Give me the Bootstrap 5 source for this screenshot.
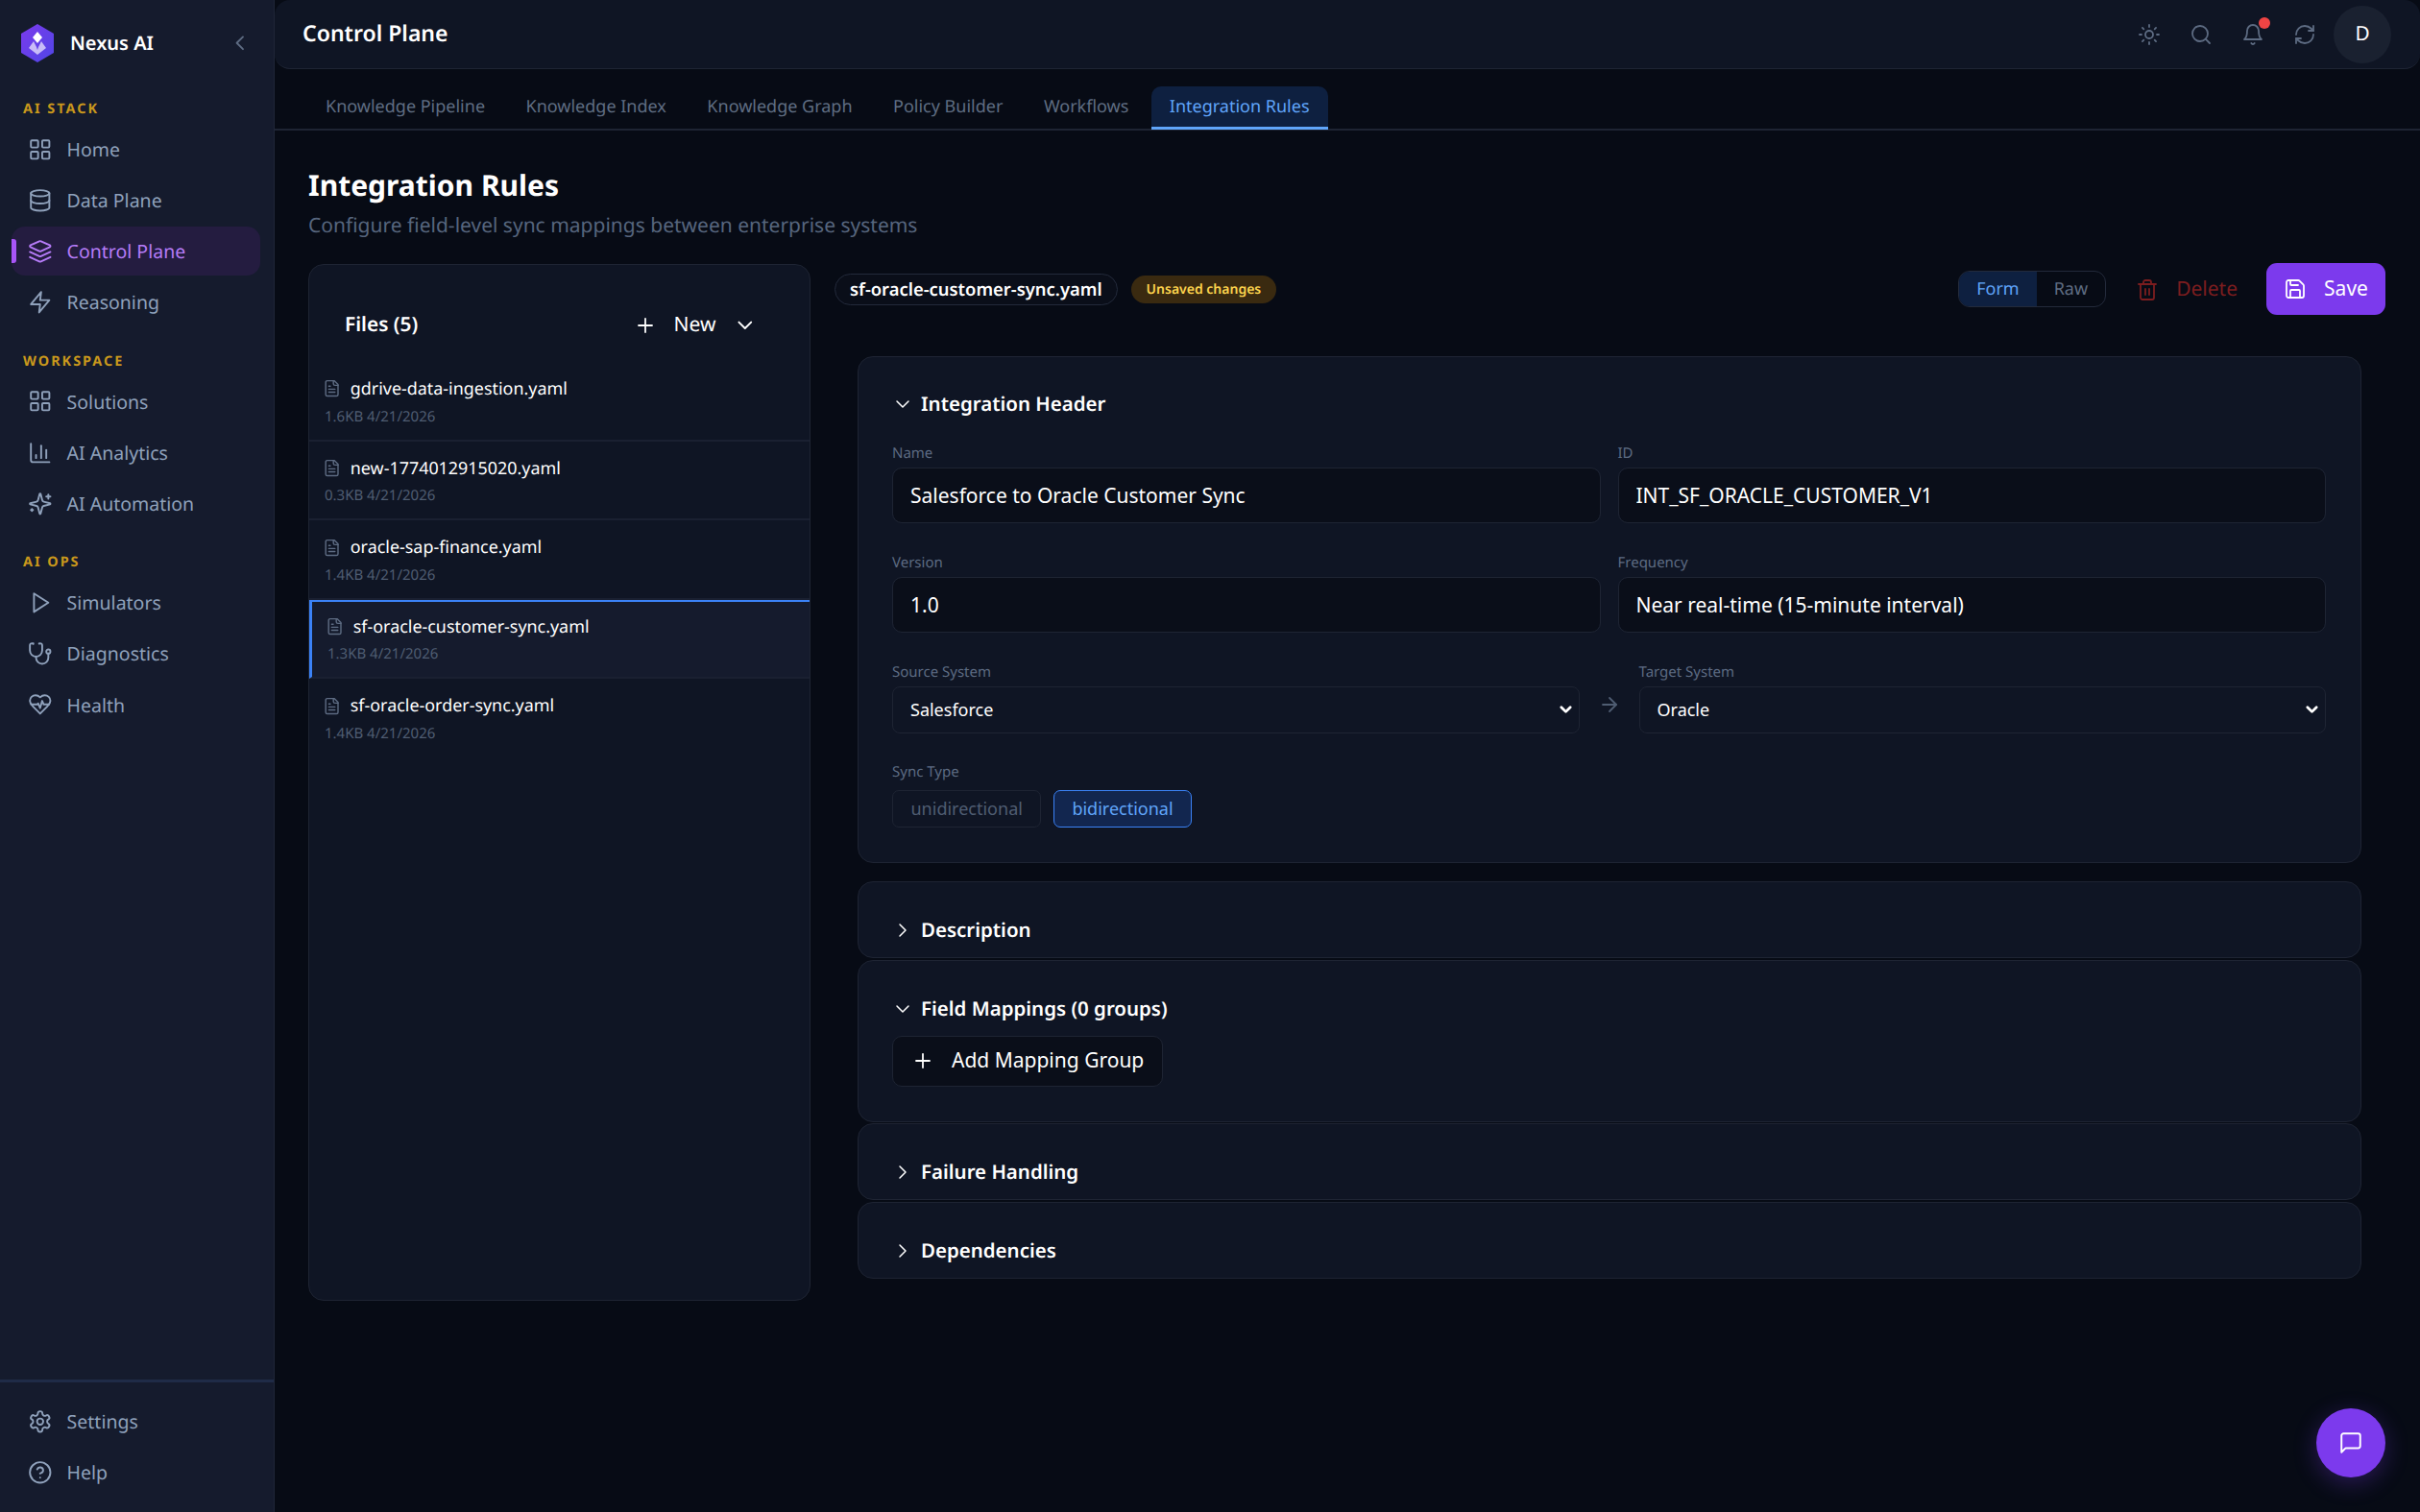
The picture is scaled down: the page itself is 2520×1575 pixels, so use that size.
<!DOCTYPE html>
<html lang="en">
<head>
  <meta charset="UTF-8">
  <meta name="viewport" content="width=device-width, initial-scale=1.0">
  <title>Nexus AI - Integration Rules</title>
  <link href="https://cdn.jsdelivr.net/npm/bootstrap@5.3.0/dist/css/bootstrap.min.css" rel="stylesheet">
  <style>
    body {
      background-color: #070b15;
      color: #fff;
      font-family: "Noto Sans", sans-serif;
      text-rendering: geometricPrecision;
      height: 100vh;
      overflow: hidden;
    }

    svg.ico {
      fill: none;
      stroke: currentColor;
      stroke-width: 1.8;
      stroke-linecap: round;
      stroke-linejoin: round;
      flex-shrink: 0;
    }

    /* sidebar */
    .side {
      width: 286px;
      flex-shrink: 0;
      background-color: #151b2d;
      border-right: 1px solid #1f2638;
      padding: 0 14px 0 12px;
    }

    .brand {
      height: 103px;
      padding: 0 0 14px 10px;
      flex-shrink: 0;
    }

    .brand-name {
      font-size: 20px;
      font-weight: 600;
      margin-left: 17px;
    }

    .brand-toggle {
      margin-right: 8px;
      color: #5d6b82;
    }

    .side-label {
      font-size: 14.4px;
      line-height: 22px;
      font-weight: 700;
      letter-spacing: 2px;
      color: #c9981c;
      padding-left: 12px;
      margin-bottom: 5px;
    }

    .side-link {
      height: 51px;
      margin-bottom: 2.2px;
      padding-left: 17px;
      gap: 15px;
      color: #8fa1bb;
      font-size: 19.5px;
      border-radius: 14px;
      text-decoration: none;
      position: relative;
    }

    .side-link.on {
      background-color: #241c40;
      color: #b57bf7;
    }

    .side-link.on::before {
      content: "";
      position: absolute;
      left: 0;
      top: 13px;
      width: 5px;
      height: 25px;
      background-color: #a855f7;
      border-radius: 0 3px 3px 0;
    }

    .side-group { margin-bottom: 23px; }

    .side-foot {
      margin: auto -14px 0 -12px;
      padding: 15px 14px 13.5px 12px;
      border-top: 3px solid #1f2b47;
    }

    /* top bar */
    .topbar {
      height: 72px;
      flex-shrink: 0;
      background-color: #0f1524;
      border-bottom: 1px solid #1e2433;
      border-radius: 16px;
      padding: 0 30px 0 29px;
    }

    .topbar-title {
      font-size: 23.04px;
      font-weight: 600;
      margin-top: -2px;
    }

    .top-ico {
      width: 54px;
      color: #5d6b82;
      position: relative;
    }

    .bell-dot {
      position: absolute;
      top: -6px;
      left: 33px;
      width: 12px;
      height: 12px;
      border-radius: 50%;
      background-color: #ef4444;
    }

    .avatar {
      width: 60px;
      height: 60px;
      margin-left: 3px;
      border-radius: 50%;
      background-color: #1a2130;
      font-size: 20.8px;
    }

    /* tabs */
    .tabbar {
      height: 64px;
      flex-shrink: 0;
      padding: 18px 0 0 34px;
      gap: 4.5px;
      border-bottom: 2px solid #1e2433;
    }

    .tabbar .nav-link {
      height: 45px;
      padding: 0 19px;
      font-size: 18px;
      color: #5f6d82;
      border-radius: 10px 10px 0 0;
      line-height: 42px;
    }

    .tabbar .nav-link.active {
      background-color: #0e2040;
      color: #60a5fa;
      border-bottom: 3px solid #60a5fa;
    }

    .page {
      padding: 35px 36px 0 35px;
    }

    .page-title {
      font-size: 30px;
      line-height: 44px;
      font-weight: 700;
      margin: 0;
    }

    .page-sub {
      font-size: 21px;
      line-height: 30px;
      color: #56657d;
      margin: 5px 0 25px;
    }

    /* files panel */
    .files {
      width: 523px;
      height: 1080px;
      flex-shrink: 0;
      background-color: #0f1524;
      border: 1px solid #1e2433;
      border-radius: 16px;
      overflow: hidden;
    }

    .files-head {
      padding: 44px 54px 19px 37px;
      height: 101px;
    }

    .files-title {
      font-size: 20.8px;
      font-weight: 600;
    }

    .new-btn {
      gap: 18px;
      font-size: 21px;
      color: #fff;
    }

    .file-row {
      background-color: transparent;
      color: #fff;
      border: 0;
      border-bottom: 2px solid #1a2031;
      border-radius: 0;
      height: 82.6px;
      padding: 15px 14px 0 14.4px;
    }

    .file-row:last-child { border-bottom: 0; }

    .file-row.on {
      background-color: #151b2d;
      border-top: 2px solid #3b82f6;
      border-left: 3px solid #3b82f6;
      padding-top: 13px;
    }

    .file-name {
      font-size: 17.92px;
      line-height: 26px;
      gap: 9.2px;
    }

    .file-name svg { color: #5d6b82; }

    .file-meta {
      font-size: 15px;
      line-height: 20px;
      color: #4f5d72;
      margin: 5.5px 0 0 1.6px;
    }

    /* editor */
    .editor {
      margin-left: 25px;
      min-width: 0;
    }

    .editor-bar {
      height: 54px;
      margin-top: -1px;
    }

    .file-pill {
      height: 33px;
      padding: 0 15px;
      margin-top: 1px;
      border: 1px solid #232a3b;
      border-radius: 17px;
      font-size: 18.4px;
      font-weight: 600;
      background-color: #0a0e19;
    }

    .dirty-pill {
      height: 29px;
      padding: 0 16px;
      margin: 1px 0 0 14px;
      border-radius: 15px;
      background-color: #3a2a10;
      color: #fcd34d;
      font-size: 14px;
      font-weight: 600;
    }

    .mode-group {
      border: 1px solid #232a3b;
      border-radius: 12px;
      overflow: hidden;
      height: 38px;
    }

    .mode-group span {
      padding: 0 18px;
      font-size: 18px;
      line-height: 36px;
      color: #5f6d82;
    }

    .mode-group span.on {
      background-color: #0e2040;
      color: #60a5fa;
    }

    .del-btn {
      color: #7c1d1f;
      font-size: 21px;
      gap: 18px;
      margin: 1px 30px 0 31px;
    }

    .save-btn {
      width: 124px;
      height: 54px;
      gap: 18px;
      padding: 0;
      font-size: 21px;
      color: #fff;
      background-color: #7c3aed;
      border: 0;
      border-radius: 11px;
    }

    .sections {
      margin: 43px 25px 0 24px;
    }

    .sect {
      background-color: #0f1524;
      border: 1px solid #1e2433;
      border-radius: 16px;
      padding: 34px 36px 12px 35px;
      margin-bottom: 1.5px;
    }

    .sect.first {
      padding-top: 33px;
      padding-bottom: 36px;
      margin-bottom: 19px;
    }

    .sect-title {
      font-size: 20.48px;
      line-height: 32px;
      font-weight: 600;
      gap: 7px;
      margin-left: -1px;
    }

    .sect-title svg.ico { stroke-width: 1.5; }

    .field-label {
      font-size: 15px;
      line-height: 22px;
      color: #5d6b82;
      margin: 0 0 4px;
      display: block;
    }

    .field-label.sync-label { margin: 29px 0 8px; }

    .grid-fields {
      --bs-gutter-x: 18px;
      --bs-gutter-y: 30px;
      margin-top: -6px;
    }

    .form-control.fld {
      height: 58px;
      background-color: #0a0e19;
      border: 1px solid #1e2433;
      border-radius: 10px;
      color: #fff;
      font-size: 21px;
      padding: 0 18px;
    }

    .form-select.fld-sel {
      height: 49px;
      background-color: #0f1524;
      border: 1px solid #1e2433;
      border-radius: 8px;
      color: #fff;
      font-size: 18px;
      padding: 0 18px;
      background-image: url("data:image/svg+xml,%3csvg xmlns='http://www.w3.org/2000/svg' viewBox='0 0 16 16'%3e%3cpath fill='none' stroke='%23fff' stroke-linecap='round' stroke-linejoin='round' stroke-width='3' d='m3 5 5 5 5-5'/%3e%3c/svg%3e");
      background-size: 15px 15px;
      background-position: right 6px center;
    }

    .sys-row { margin-top: 30px; }

    .sys-col {
      flex: 1 1 0;
      min-width: 0;
    }

    .sys-arrow {
      width: 62px;
      padding-bottom: 18px;
      color: #4f5d72;
    }

    .sync-row { gap: 12.5px; }

    .sync-btn {
      height: 39px;
      padding: 0 18.5px;
      font-size: 18px;
      color: #4f5d72;
      background-color: transparent;
      border: 1px solid #1e2433;
      border-radius: 7px;
    }

    .sync-btn.on {
      background-color: #12264f;
      border-color: #3b82f6;
      color: #60a5fa;
    }

    .add-btn {
      height: 53px;
      padding: 0 19px;
      gap: 18px;
      font-size: 21px;
      color: #fff;
      background-color: #0a0e19;
      border: 1px solid #1e2433;
      border-radius: 10px;
      margin: 12px 0 24px 0;
    }

    .chat-fab {
      position: fixed;
      left: 2412px;
      top: 1467px;
      width: 72px;
      height: 72px;
      border: 0;
      border-radius: 50%;
      color: #fff;
      background-color: #7c3aed;
      box-shadow: 0 6px 24px rgba(124, 58, 237, .3);
    }
  </style>
</head>
<body class="d-flex">

  <!-- icon sprite -->
  <svg class="d-none" xmlns="http://www.w3.org/2000/svg">
    <symbol id="i-grid" viewBox="0 0 24 24"><rect x="3" y="3" width="7" height="7" rx="1"/><rect x="14" y="3" width="7" height="7" rx="1"/><rect x="14" y="14" width="7" height="7" rx="1"/><rect x="3" y="14" width="7" height="7" rx="1"/></symbol>
    <symbol id="i-db" viewBox="0 0 24 24"><ellipse cx="12" cy="5" rx="9" ry="3"/><path d="M3 5V19A9 3 0 0 0 21 19V5"/><path d="M3 12A9 3 0 0 0 21 12"/></symbol>
    <symbol id="i-layers" viewBox="0 0 24 24"><path d="m12.83 2.18a2 2 0 0 0-1.66 0L2.6 6.08a1 1 0 0 0 0 1.83l8.58 3.91a2 2 0 0 0 1.66 0l8.58-3.9a1 1 0 0 0 0-1.83Z"/><path d="m22 17.65-9.17 4.16a2 2 0 0 1-1.66 0L2 17.65"/><path d="m22 12.65-9.17 4.16a2 2 0 0 1-1.66 0L2 12.65"/></symbol>
    <symbol id="i-zap" viewBox="0 0 24 24"><path d="M13 2 3 14h9l-1 8 10-12h-9l1-8z"/></symbol>
    <symbol id="i-chart" viewBox="0 0 24 24"><path d="M3 3v16a2 2 0 0 0 2 2h16"/><path d="M18 17V9"/><path d="M13 17V5"/><path d="M8 17v-3"/></symbol>
    <symbol id="i-spark" viewBox="0 0 24 24"><path d="M9.937 15.5A2 2 0 0 0 8.5 14.063l-6.135-1.582a.5.5 0 0 1 0-.962L8.5 9.936A2 2 0 0 0 9.937 8.5l1.582-6.135a.5.5 0 0 1 .963 0L14.063 8.5A2 2 0 0 0 15.5 9.937l6.135 1.581a.5.5 0 0 1 0 .964L15.5 14.063a2 2 0 0 0-1.437 1.437l-1.582 6.135a.5.5 0 0 1-.963 0z"/><path d="M20 3v4"/><path d="M22 5h-4"/><path d="M4 17v2"/><path d="M5 18H3"/></symbol>
    <symbol id="i-play" viewBox="0 0 24 24"><polygon points="6 3 20 12 6 21 6 3"/></symbol>
    <symbol id="i-steth" viewBox="0 0 24 24"><path d="M4.8 2.3A.3.3 0 1 0 5 2H4a2 2 0 0 0-2 2v5a6 6 0 0 0 6 6v0a6 6 0 0 0 6-6V4a2 2 0 0 0-2-2h-1a.2.2 0 1 0 .3.3"/><path d="M8 15v1a6 6 0 0 0 6 6v0a6 6 0 0 0 6-6v-4"/><circle cx="20" cy="10" r="2"/></symbol>
    <symbol id="i-heart" viewBox="0 0 24 24"><path d="M19 14c1.49-1.46 3-3.21 3-5.5A5.5 5.5 0 0 0 16.5 3c-1.76 0-3 .5-4.5 2-1.5-1.5-2.74-2-4.5-2A5.5 5.5 0 0 0 2 8.5c0 2.3 1.5 4.05 3 5.5l7 7Z"/><path d="M3.22 12H9.5l.5-1 2 4.5 2-7 1.5 3.5h5.27"/></symbol>
    <symbol id="i-gear" viewBox="0 0 24 24"><path d="M12.22 2h-.44a2 2 0 0 0-2 2v.18a2 2 0 0 1-1 1.73l-.43.25a2 2 0 0 1-2 0l-.15-.08a2 2 0 0 0-2.73.73l-.22.38a2 2 0 0 0 .73 2.73l.15.1a2 2 0 0 1 1 1.72v.51a2 2 0 0 1-1 1.74l-.15.09a2 2 0 0 0-.73 2.73l.22.38a2 2 0 0 0 2.73.73l.15-.08a2 2 0 0 1 2 0l.43.25a2 2 0 0 1 1 1.73V20a2 2 0 0 0 2 2h.44a2 2 0 0 0 2-2v-.18a2 2 0 0 1 1-1.73l.43-.25a2 2 0 0 1 2 0l.15.08a2 2 0 0 0 2.73-.73l.22-.39a2 2 0 0 0-.73-2.73l-.15-.08a2 2 0 0 1-1-1.74v-.5a2 2 0 0 1 1-1.74l.15-.09a2 2 0 0 0 .73-2.73l-.22-.38a2 2 0 0 0-2.73-.73l-.15.08a2 2 0 0 1-2 0l-.43-.25a2 2 0 0 1-1-1.73V4a2 2 0 0 0-2-2z"/><circle cx="12" cy="12" r="3"/></symbol>
    <symbol id="i-help" viewBox="0 0 24 24"><circle cx="12" cy="12" r="10"/><path d="M9.09 9a3 3 0 0 1 5.83 1c0 2-3 3-3 3"/><path d="M12 17h.01"/></symbol>
    <symbol id="i-sun" viewBox="0 0 24 24"><circle cx="12" cy="12" r="4"/><path d="M12 2v2"/><path d="M12 20v2"/><path d="m4.93 4.93 1.41 1.41"/><path d="m17.66 17.66 1.41 1.41"/><path d="M2 12h2"/><path d="M20 12h2"/><path d="m6.34 17.66-1.41 1.41"/><path d="m19.07 4.93-1.41 1.41"/></symbol>
    <symbol id="i-search" viewBox="0 0 24 24"><circle cx="11" cy="11" r="8"/><path d="m21 21-4.3-4.3"/></symbol>
    <symbol id="i-bell" viewBox="0 0 24 24"><path d="M6 8a6 6 0 0 1 12 0c0 7 3 9 3 9H3s3-2 3-9"/><path d="M10.3 21a1.94 1.94 0 0 0 3.4 0"/></symbol>
    <symbol id="i-sync" viewBox="0 0 24 24"><path d="M3 12a9 9 0 0 1 9-9 9.75 9.75 0 0 1 6.74 2.74L21 8"/><path d="M21 3v5h-5"/><path d="M21 12a9 9 0 0 1-9 9 9.75 9.75 0 0 1-6.74-2.74L3 16"/><path d="M8 16H3v5"/></symbol>
    <symbol id="i-file" viewBox="0 0 24 24"><path d="M15 2H6a2 2 0 0 0-2 2v16a2 2 0 0 0 2 2h12a2 2 0 0 0 2-2V7Z"/><path d="M14 2v4a2 2 0 0 0 2 2h4"/><path d="M10 9H8"/><path d="M16 13H8"/><path d="M16 17H8"/></symbol>
    <symbol id="i-trash" viewBox="0 0 24 24"><path d="M3 6h18"/><path d="M19 6v14c0 1-1 2-2 2H7c-1 0-2-1-2-2V6"/><path d="M8 6V4c0-1 1-2 2-2h4c1 0 2 1 2 2v2"/><line x1="10" y1="11" x2="10" y2="17"/><line x1="14" y1="11" x2="14" y2="17"/></symbol>
    <symbol id="i-save" viewBox="0 0 24 24"><path d="M15.2 3a2 2 0 0 1 1.4.6l3.8 3.8a2 2 0 0 1 .6 1.4V19a2 2 0 0 1-2 2H5a2 2 0 0 1-2-2V5a2 2 0 0 1 2-2z"/><path d="M17 21v-7a1 1 0 0 0-1-1H8a1 1 0 0 0-1 1v7"/><path d="M7 3v4a1 1 0 0 0 1 1h7"/></symbol>
    <symbol id="i-plus" viewBox="0 0 24 24"><path d="M5 12h14"/><path d="M12 5v14"/></symbol>
    <symbol id="i-down" viewBox="0 0 24 24"><path d="m6 9 6 6 6-6"/></symbol>
    <symbol id="i-right" viewBox="0 0 24 24"><path d="m9 18 6-6-6-6"/></symbol>
    <symbol id="i-left" viewBox="0 0 24 24"><path d="m15 18-6-6 6-6"/></symbol>
    <symbol id="i-arrow" viewBox="0 0 24 24"><path d="M5 12h14"/><path d="m12 5 7 7-7 7"/></symbol>
    <symbol id="i-chat" viewBox="0 0 24 24"><path d="M21 15a2 2 0 0 1-2 2H7l-4 4V5a2 2 0 0 1 2-2h14a2 2 0 0 1 2 2z"/></symbol>
  </svg>

  <!-- Sidebar -->
  <aside class="side d-flex flex-column">
    <div class="brand d-flex align-items-center">
      <svg width="34" height="40" viewBox="0 0 34 40">
        <defs>
          <linearGradient id="logoFill" x1="0" y1="0" x2="1" y2="1">
            <stop offset="0" stop-color="#7c3aed"/>
            <stop offset="1" stop-color="#4f46e5"/>
          </linearGradient>
        </defs>
        <polygon points="17,0 34,10 34,30 17,40 0,30 0,10" fill="url(#logoFill)"/>
        <polygon points="17,8 22,14 17,20 12,14" fill="#fff"/>
        <path d="M13 18 L8 25 L17 32 L26 25 L21 18 L18 24 L17 27 L16 24 Z" fill="#fff" fill-opacity=".65"/>
      </svg>
      <span class="brand-name">Nexus AI</span>
      <svg class="ico brand-toggle ms-auto" width="25.6" height="25.6"><use href="#i-left"/></svg>
    </div>

    <div class="side-group">
      <div class="side-label">AI STACK</div>
      <a class="side-link d-flex align-items-center" href="#"><svg class="ico" width="25.6" height="25.6"><use href="#i-grid"/></svg>Home</a>
      <a class="side-link d-flex align-items-center" href="#"><svg class="ico" width="25.6" height="25.6"><use href="#i-db"/></svg>Data Plane</a>
      <a class="side-link on d-flex align-items-center" href="#"><svg class="ico" width="25.6" height="25.6"><use href="#i-layers"/></svg>Control Plane</a>
      <a class="side-link d-flex align-items-center" href="#"><svg class="ico" width="25.6" height="25.6"><use href="#i-zap"/></svg>Reasoning</a>
    </div>

    <div class="side-group">
      <div class="side-label">WORKSPACE</div>
      <a class="side-link d-flex align-items-center" href="#"><svg class="ico" width="25.6" height="25.6"><use href="#i-grid"/></svg>Solutions</a>
      <a class="side-link d-flex align-items-center" href="#"><svg class="ico" width="25.6" height="25.6"><use href="#i-chart"/></svg>AI Analytics</a>
      <a class="side-link d-flex align-items-center" href="#"><svg class="ico" width="25.6" height="25.6"><use href="#i-spark"/></svg>AI Automation</a>
    </div>

    <div class="side-group">
      <div class="side-label">AI OPS</div>
      <a class="side-link d-flex align-items-center" href="#"><svg class="ico" width="25.6" height="25.6"><use href="#i-play"/></svg>Simulators</a>
      <a class="side-link d-flex align-items-center" href="#"><svg class="ico" width="25.6" height="25.6"><use href="#i-steth"/></svg>Diagnostics</a>
      <a class="side-link d-flex align-items-center" href="#"><svg class="ico" width="25.6" height="25.6"><use href="#i-heart"/></svg>Health</a>
    </div>

    <div class="side-foot">
      <a class="side-link d-flex align-items-center" href="#"><svg class="ico" width="25.6" height="25.6"><use href="#i-gear"/></svg>Settings</a>
      <a class="side-link d-flex align-items-center" href="#"><svg class="ico" width="25.6" height="25.6"><use href="#i-help"/></svg>Help</a>
    </div>
  </aside>

  <!-- Main -->
  <div class="flex-grow-1 d-flex flex-column" style="min-width:0">
    <header class="topbar d-flex align-items-center">
      <span class="topbar-title">Control Plane</span>
      <div class="ms-auto d-flex align-items-center">
        <span class="top-ico d-flex justify-content-center"><svg class="ico" width="24" height="24"><use href="#i-sun"/></svg></span>
        <span class="top-ico d-flex justify-content-center"><svg class="ico" width="24" height="24"><use href="#i-search"/></svg></span>
        <span class="top-ico d-flex justify-content-center"><svg class="ico" width="24" height="24"><use href="#i-bell"/></svg><span class="bell-dot"></span></span>
        <span class="top-ico d-flex justify-content-center"><svg class="ico" width="24" height="24"><use href="#i-sync"/></svg></span>
        <span class="avatar d-flex align-items-center justify-content-center">D</span>
      </div>
    </header>

    <nav class="tabbar nav">
      <a class="nav-link" href="#">Knowledge Pipeline</a>
      <a class="nav-link" href="#">Knowledge Index</a>
      <a class="nav-link" href="#">Knowledge Graph</a>
      <a class="nav-link" href="#">Policy Builder</a>
      <a class="nav-link" href="#">Workflows</a>
      <a class="nav-link active" href="#">Integration Rules</a>
    </nav>

    <main class="page">
      <h1 class="page-title">Integration Rules</h1>
      <p class="page-sub">Configure field-level sync mappings between enterprise systems</p>

      <div class="d-flex align-items-start">
        <!-- File list -->
        <section class="files">
          <div class="files-head d-flex align-items-center justify-content-between">
            <span class="files-title">Files (5)</span>
            <span class="new-btn d-flex align-items-center">
              <svg class="ico" width="24" height="24"><use href="#i-plus"/></svg>New
              <svg class="ico" width="25.6" height="25.6"><use href="#i-down"/></svg>
            </span>
          </div>
          <div id="fileList" class="list-group"></div>
        </section>

        <!-- Editor -->
        <section class="editor flex-grow-1">
          <div class="editor-bar d-flex align-items-center">
            <span class="file-pill d-flex align-items-center">sf-oracle-customer-sync.yaml</span>
            <span class="dirty-pill d-flex align-items-center">Unsaved changes</span>
            <div class="mode-group d-flex ms-auto">
              <span class="on">Form</span>
              <span>Raw</span>
            </div>
            <span class="del-btn d-flex align-items-center"><svg class="ico" width="24" height="24"><use href="#i-trash"/></svg>Delete</span>
            <button class="save-btn btn d-flex align-items-center justify-content-center"><svg class="ico" width="24" height="24"><use href="#i-save"/></svg>Save</button>
          </div>

          <div class="sections">
            <div class="sect first">
              <div class="sect-title d-flex align-items-center"><svg class="ico" width="24" height="24"><use href="#i-down"/></svg>Integration Header</div>
              <div class="row grid-fields">
                <div class="col-6">
                  <label class="field-label">Name</label>
                  <input class="form-control fld" value="Salesforce to Oracle Customer Sync">
                </div>
                <div class="col-6">
                  <label class="field-label">ID</label>
                  <input class="form-control fld" value="INT_SF_ORACLE_CUSTOMER_V1">
                </div>
                <div class="col-6">
                  <label class="field-label">Version</label>
                  <input class="form-control fld" value="1.0">
                </div>
                <div class="col-6">
                  <label class="field-label">Frequency</label>
                  <input class="form-control fld" value="Near real-time (15-minute interval)">
                </div>
              </div>
              <div class="sys-row d-flex align-items-end">
                <div class="sys-col">
                  <label class="field-label">Source System</label>
                  <select class="form-select fld-sel"><option>Salesforce</option></select>
                </div>
                <div class="sys-arrow d-flex justify-content-center flex-shrink-0"><svg class="ico" width="24" height="24"><use href="#i-arrow"/></svg></div>
                <div class="sys-col">
                  <label class="field-label">Target System</label>
                  <select class="form-select fld-sel"><option>Oracle</option></select>
                </div>
              </div>
              <label class="field-label sync-label">Sync Type</label>
              <div class="sync-row d-flex">
                <button class="sync-btn btn">unidirectional</button>
                <button class="sync-btn btn on">bidirectional</button>
              </div>
            </div>

            <div class="sect">
              <div class="sect-title d-flex align-items-center"><svg class="ico" width="24" height="24"><use href="#i-right"/></svg>Description</div>
            </div>
            <div class="sect">
              <div class="sect-title d-flex align-items-center"><svg class="ico" width="24" height="24"><use href="#i-down"/></svg>Field Mappings (0 groups)</div>
              <button class="add-btn btn d-inline-flex align-items-center"><svg class="ico" width="24" height="24"><use href="#i-plus"/></svg>Add Mapping Group</button>
            </div>
            <div class="sect">
              <div class="sect-title d-flex align-items-center"><svg class="ico" width="24" height="24"><use href="#i-right"/></svg>Failure Handling</div>
            </div>
            <div class="sect">
              <div class="sect-title d-flex align-items-center"><svg class="ico" width="24" height="24"><use href="#i-right"/></svg>Dependencies</div>
            </div>
          </div>
        </section>
      </div>
    </main>
  </div>

  <button class="chat-fab d-flex align-items-center justify-content-center"><svg class="ico" width="26" height="26"><use href="#i-chat"/></svg></button>

  <script src="https://cdn.jsdelivr.net/npm/bootstrap@5.3.0/dist/js/bootstrap.bundle.min.js"></script>
  <script>
    // File rows
    const files = [
      { name: "gdrive-data-ingestion.yaml", size: "1.6KB" },
      { name: "new-1774012915020.yaml", size: "0.3KB" },
      { name: "oracle-sap-finance.yaml", size: "1.4KB" },
      { name: "sf-oracle-customer-sync.yaml", size: "1.3KB", on: true },
      { name: "sf-oracle-order-sync.yaml", size: "1.4KB" }
    ];

    document.getElementById("fileList").innerHTML = files
      .map(
        (f) => `
        <div class="list-group-item file-row${f.on ? " on" : ""}">
          <div class="file-name d-flex align-items-center"><svg class="ico" width="19.2" height="19.2"><use href="#i-file"/></svg>${f.name}</div>
          <div class="file-meta">${f.size} 4/21/2026</div>
        </div>`
      )
      .join("");
  </script>
</body>
</html>
